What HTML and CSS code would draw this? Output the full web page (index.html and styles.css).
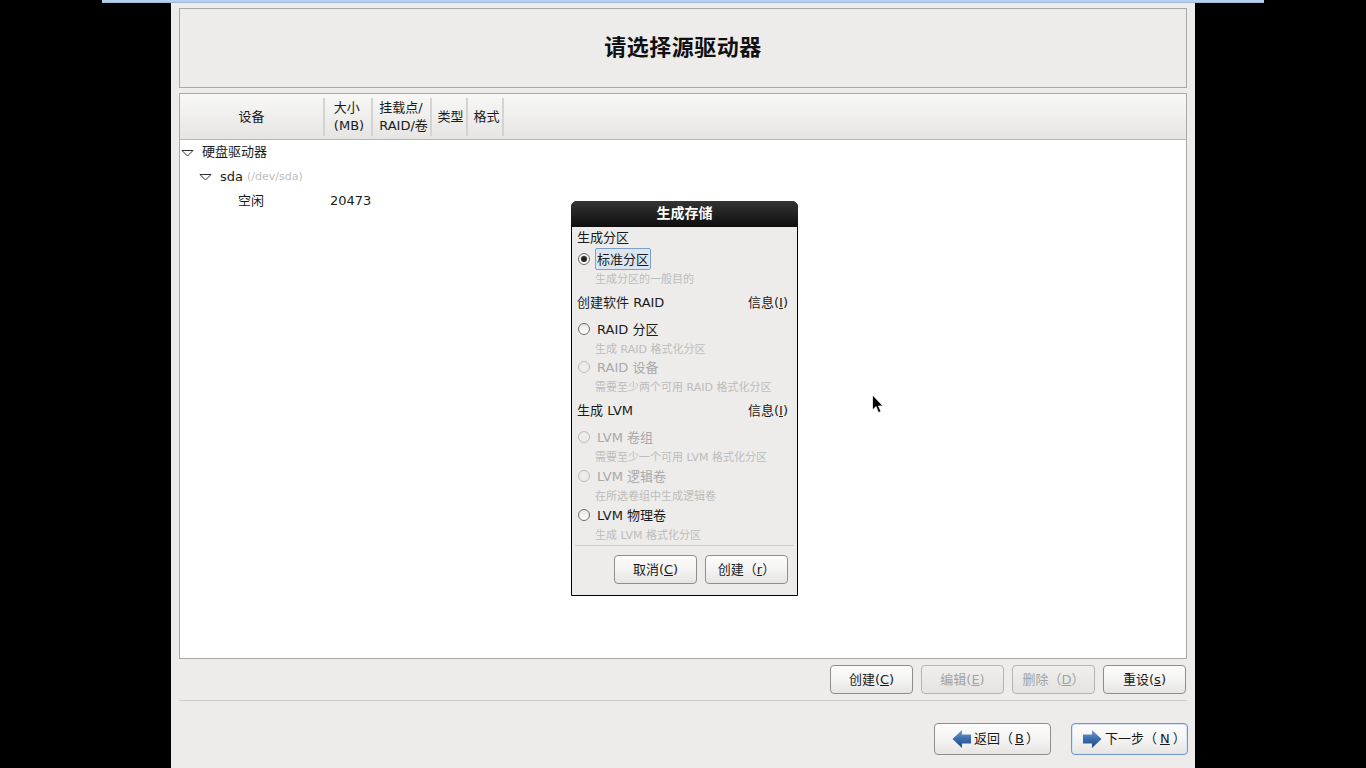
FILE: index.html
```html
<!DOCTYPE html>
<html lang="zh-CN">
<head>
<meta charset="utf-8">
<title>请选择源驱动器</title>
<link rel="stylesheet" href="styles.css">
</head>
<body>
<div class="topbar"></div>
<main class="panel">
  <header class="title-box"><h1>请选择源驱动器</h1></header>
  <section class="table-box">
    <div class="thead">
      <div class="th c1"><div>设备</div></div>
      <div class="th c2"><div>大小<br>(MB)</div></div>
      <div class="th c3"><div>挂载点/<br>RAID/卷</div></div>
      <div class="th c4"><div>类型</div></div>
      <div class="th c5"><div>格式</div></div>
    </div>
    <div class="tbody">
      <div class="row lvl1"><svg class="tri" width="13" height="8" viewBox="0 0 13 8"><path d="M1 1.500h11L6.500 7z" fill="#fff" stroke="#2e2e2e"/></svg><span>硬盘驱动器</span></div>
      <div class="row lvl2"><svg class="tri" width="13" height="8" viewBox="0 0 13 8"><path d="M1 1.500h11L6.500 7z" fill="#fff" stroke="#2e2e2e"/></svg><span>sda</span><span class="path">(/dev/sda)</span></div>
      <div class="row lvl3"><span class="free">空闲</span><span>20473</span></div>
    </div>
  </section>
  <div class="actions">
    <button class="btn">创建(<u>C</u>)</button>
    <button class="btn off">编辑(<u>E</u>)</button>
    <button class="btn off">删除（<u>D</u>）</button>
    <button class="btn">重设(<u>s</u>)</button>
  </div>
  <hr class="rule">
  <div class="nav">
    <button class="btn navbtn back"><svg width="20" height="20" viewBox="0 0 20 20"><defs><linearGradient id="ar" x1="0" y1="0" x2="0" y2="1"><stop offset="0" stop-color="#7a9fd0"/><stop offset=".5" stop-color="#3a6cab"/><stop offset="1" stop-color="#204a87"/></linearGradient></defs><path d="M.5 10 10 1v4.500h9v9h-9V19z" fill="url(#ar)"/></svg>返回（<u>B</u>）</button>
    <button class="btn navbtn next"><svg width="20" height="20" viewBox="0 0 20 20"><path d="M19.500 10 10 1v4.500H1v9h9V19z" fill="url(#ar)"/></svg>下一步（<u>N</u>）</button>
  </div>
</main>

<div class="dialog">
  <div class="dlg-title">生成存储</div>
  <div class="dlg-body">
    <div class="head lead">生成分区</div>
    <div class="radio first"><i class="dot on"></i><span class="focus-label">标准分区</span></div>
    <div class="desc">生成分区的一般目的</div>
    <div class="head split"><span>创建软件 RAID</span><span>信息(<u>I</u>)</span></div>
    <div class="radio gap"><i class="dot"></i><span>RAID 分区</span></div>
    <div class="desc short">生成 RAID 格式化分区</div>
    <div class="radio dis"><i class="dot"></i><span>RAID 设备</span></div>
    <div class="desc">需要至少两个可用 RAID 格式化分区</div>
    <div class="head split"><span>生成 LVM</span><span>信息(<u>I</u>)</span></div>
    <div class="radio gap dis"><i class="dot"></i><span>LVM 卷组</span></div>
    <div class="desc">需要至少一个可用 LVM 格式化分区</div>
    <div class="radio dis"><i class="dot"></i><span>LVM 逻辑卷</span></div>
    <div class="desc">在所选卷组中生成逻辑卷</div>
    <div class="radio"><i class="dot"></i><span>LVM 物理卷</span></div>
    <div class="desc">生成 LVM 格式化分区</div>
    <hr class="dlg-rule">
    <div class="dlg-actions">
      <button class="btn dlg-btn">取消(<u>C</u>)</button>
      <button class="btn dlg-btn">创建（<u>r</u>）</button>
    </div>
  </div>
</div>

<svg class="cursor" width="14" height="21" viewBox="0 0 14 21"><path d="M1.500 1v15l3.500-3.500 2.500 6 2.500-1-2.500-5.500H12z" fill="#000" stroke="#fff" stroke-opacity=".75"/></svg>
</body>
</html>
```
FILE: styles.css
```css
* { box-sizing: border-box; }
html, body { margin: 0; height: 768px; overflow: hidden; background: #000; }
body {
  position: relative;
  font: 13px/18px "DejaVu Sans", "Noto Sans CJK SC", sans-serif;
  color: #1a1a1a;
}
u { text-decoration: underline; }

.topbar {
  height: 3px;
  margin: 0 102px;
  background: #b8d0ec;
  border-bottom: 1px solid #9fbbdc;
}
.panel {
  width: 1024px;
  height: 765px;
  margin-left: 171px;
  padding: 5px 8px 0;
  background: #edeceb;
  display: flex;
  flex-direction: column;
}
.title-box {
  height: 80px;
  flex: none;
  border: 1px solid #aaa9a8;
  display: flex;
  align-items: center;
  justify-content: center;
}
.title-box h1 { margin: 0; font-size: 22px; font-weight: bold; color: #111; letter-spacing: .5px; }

.table-box {
  height: 566px;
  flex: none;
  margin-top: 5px;
  border: 1px solid #aaa9a8;
  background: #fff;
}
.thead {
  height: 45px;
  display: flex;
  align-items: stretch;
  padding: 4px 0 3px;
  background: linear-gradient(#f8f8f7, #e6e5e4);
  box-shadow: 0 1px 0 #b5b4b3;
}
.th {
  display: flex;
  align-items: center;
  justify-content: center;
  text-align: left;
  padding-left: 2px;
  border-right: 2px solid #d4d3d2;
  line-height: 18px;
}
.c1 { width: 145px; padding-left: 0; }
.c2 { width: 48px; }
.c3 { width: 59px; padding-left: 4px; }
.c4 { width: 36px; padding-left: 3px; }
.c5 { width: 36px; padding-left: 3px; }

.tbody { padding-top: 2px; }
.row { height: 24px; display: flex; align-items: center; }
.tri { flex: none; }
.lvl1 { padding-left: 1px; }
.lvl1 span { margin-top: -2px; }
.lvl1 .tri { margin-right: 8px; }
.lvl2 { padding-left: 19px; }
.lvl2 .tri { margin-right: 8px; }
.path { margin-left: 4px; font-size: 11px; color: #bdbdbd; }
.lvl3 { padding-left: 58px; }
.free { width: 92px; }

.btn {
  font: inherit;
  color: #1a1a1a;
  padding: 0;
  border: 1px solid #8f8e8d;
  border-radius: 4px;
  background: linear-gradient(#fcfcfc, #f4f4f3 50%, #e6e5e4);
}
.actions {
  margin-top: 6px;
  padding-right: 1px;
  display: flex;
  justify-content: flex-end;
  gap: 8px;
  flex: none;
}
.actions .btn { width: 83px; height: 29px; }
.btn.off { color: #a3a3a2; border-color: #b5b4b3; background: linear-gradient(#f0efee, #e4e3e2); }
.rule {
  margin: 6px 0 0;
  border: 0;
  border-top: 1px solid #cfcecd;
  flex: none;
}
.nav {
  margin: 22px -1px 0 0;
  display: flex;
  justify-content: flex-end;
  gap: 20px;
  flex: none;
}
.navbtn {
  width: 117px;
  height: 32px;
  display: flex;
  align-items: center;
  justify-content: flex-start;
}
.back { padding-left: 17px; gap: 2px; }
.next { padding-left: 10px; gap: 3px; border-color: #6f98c8; box-shadow: inset 0 0 0 1px #d7e3f1; }

.dialog {
  position: absolute;
  left: 571px;
  top: 201px;
  width: 227px;
  height: 395px;
  background: #edeceb;
  border: 1px solid #000;
  border-radius: 6px 6px 0 0;
}
.dlg-title {
  height: 26px;
  margin: -1px -1px 0;
  border-radius: 6px 6px 0 0;
  background: linear-gradient(#353535, #0e0e0e);
  color: #fff;
  font-weight: bold;
  font-size: 14px;
  line-height: 25px;
  text-align: center;
}
.dlg-body { padding: 2px 9px 0 5px; }
.head { height: 20px; line-height: 20px; color: #1a1a1a; }
.head.lead { line-height: 18px; }
.split { display: flex; justify-content: space-between; margin-top: 4px; }
.radio { height: 20px; display: flex; align-items: center; }
.radio.first { height: 22px; margin-top: -1px; }
.radio.gap { margin-top: 7px; }
.dot {
  flex: none;
  width: 12px;
  height: 12px;
  margin: 0 7px 2px 1px;
  border: 1px solid #6e6e6e;
  border-radius: 50%;
  background: linear-gradient(#e6e6e5, #fff);
  display: flex;
  align-items: center;
  justify-content: center;
}
.dot.on { margin-bottom: 0; }
.dot.on::after { content: ""; width: 6px; height: 6px; border-radius: 50%; background: #222; }
.radio.dis { color: #a9a9a8; }
.radio.dis .dot { border-color: #bdbcbb; background: #edeceb; }
.focus-label {
  margin-left: -2px;
  padding: 0 1px;
  height: 22px;
  line-height: 21px;
  border: 1px solid #7f9fc7;
  border-radius: 2px;
  background: #dce6f2;
}
.desc { height: 18px; margin-top: 1px; padding-left: 18px; font-size: 11px; line-height: 18px; color: #bcbcbb; }
.desc.short { height: 17px; }
.dlg-rule { margin: 0 -6px 0 -2px; border: 0; border-top: 1px solid #cfcecd; }
.dlg-actions { margin-top: 9px; display: flex; justify-content: flex-end; gap: 8px; }
.dlg-btn { width: 83px; height: 29px; }

.cursor { position: absolute; left: 871px; top: 394px; }
```
